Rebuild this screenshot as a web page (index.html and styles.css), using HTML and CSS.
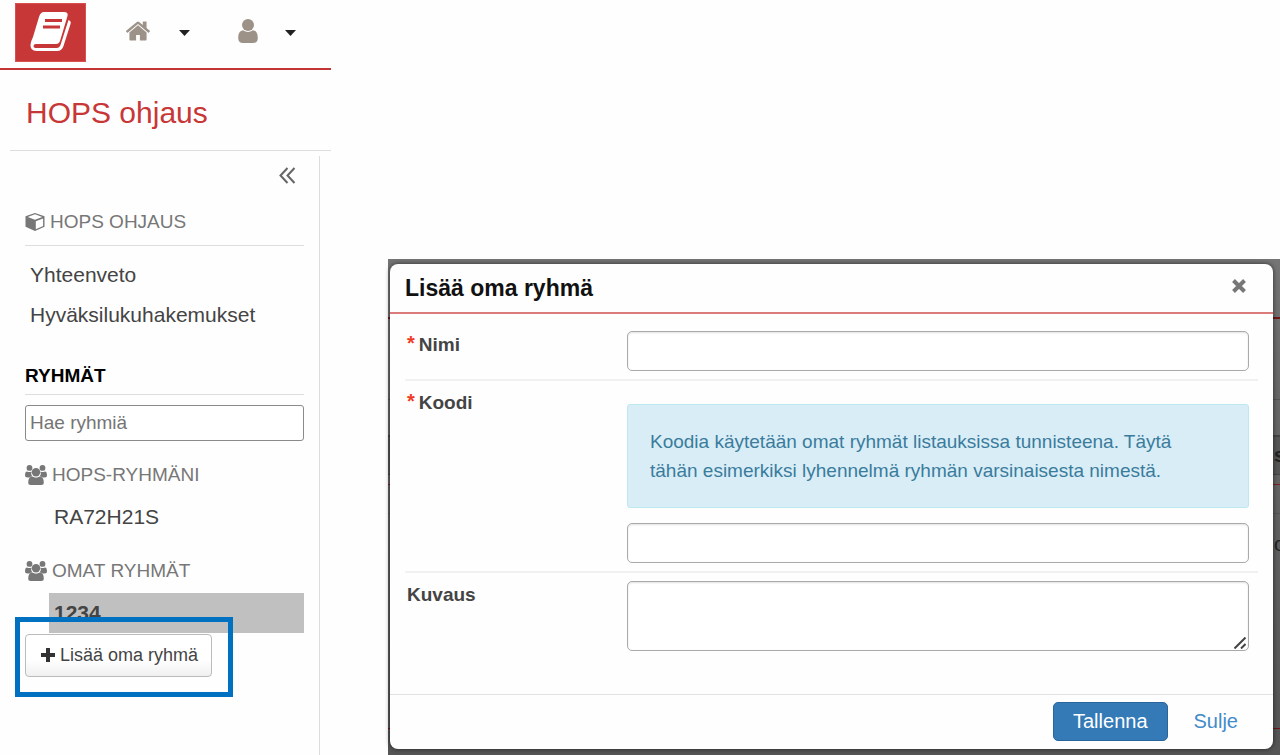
FILE: index.html
```
<!DOCTYPE html>
<html lang="fi">
<head>
<meta charset="utf-8">
<title>HOPS ohjaus</title>
<link rel="stylesheet" href="styles.css">
</head>
<body>
<svg class="defs" aria-hidden="true">
  <symbol id="group" viewBox="0 0 22 20">
    <circle cx="4.500" cy="2.900" r="2.900"/><circle cx="17.500" cy="2.900" r="2.900"/>
    <path d="M2 6.400q2.500 1 4.600 0-1.300 3 .6 5.200-1.700.2-2.600 1H2.200Q0 12.500 0 10.500 0 6.500 2 6.400zM20 6.400q-2.500 1-4.600 0 1.300 3-.6 5.200 1.700.2 2.600 1h2.400q2.200 0 2.200-2Q22 6.500 20 6.400z"/>
    <circle cx="11" cy="7.200" r="4.200"/>
    <path d="M7.200 11.500q3.800 2.300 7.600 0 4 .3 4 6 0 2.500-2.500 2.500H5.700q-2.500 0-2.500-2.500 0-5.700 4-6z"/>
  </symbol>
</svg>
<div class="layout">
  <aside class="sidebar">
    <header class="topbar">
      <a class="logo" href="#" aria-label="Etusivu">
        <svg viewBox="0 0 42 40"><path class="book-cover" d="M14 1h20q4.500 0 3.500 4L30 30q-1 3-4 3H6q-2.500 0-2.500 2t3 2h20q3 0 4-3l8-25q3 1 2 4l-7 22q-1.500 5-6.500 5H6.500Q0 40 .5 33.500 1 30 3 26L9 6q1.500-5 5-5z"/><path class="book-lines" d="M15 9.500h17M13 16h17"/></svg>
      </a>
      <button class="menu" type="button" aria-label="Koti">
        <svg class="home" viewBox="90 240 1612 1300"><path d="M1472 992v480q0 26-19 45t-45 19h-384v-384h-256v384h-384q-26 0-45-19t-19-45v-480q0-1 .5-3t.5-3l575-474 575 474q1 2 1 6zm223-69l-62 74q-8 9-21 11h-3q-13 0-21-7l-692-577-692 577q-12 8-24 7-13-2-21-11l-62-74q-8-10-7-23.500t11-21.500l719-599q32-26 76-26t76 26l244 204v-195q0-14 9-23t23-9h192q14 0 23 9t9 23v408l219 182q10 8 11 21.500t-7 23.500z"/></svg>
        <svg class="caret" viewBox="0 0 11 6"><path d="M0 0h11L5.500 6z"/></svg>
      </button>
      <button class="menu" type="button" aria-label="Käyttäjä">
        <svg class="user" viewBox="0 0 20 24"><circle cx="10" cy="6" r="6"/><path d="M5 11.300q5 3.600 10 0 4.800.4 4.800 7.700 0 5-4.800 5H5q-4.800 0-4.800-5 0-7.300 4.800-7.700z"/></svg>
        <svg class="caret" viewBox="0 0 11 6"><path d="M0 0h11L5.500 6z"/></svg>
      </button>
    </header>
    <h1 class="page-title">HOPS ohjaus</h1>
    <nav class="nav">
      <button class="collapse" type="button" aria-label="Pienennä valikko">
        <svg viewBox="0 0 17 17"><path d="M8.500 1 1.500 8.500l7 7.500M15.500 1l-7 7.500 7 7.500"/></svg>
      </button>
      <h2 class="section section-ruled">
        <svg class="cube" viewBox="0 0 19 18"><path d="M9.500 0 19 3.300v10.400L9.500 18 0 13.700V3.300z"/><path class="cube-light" d="M9.500 1.300 16.800 4 9.500 6.800 2.200 4zM10.300 8.300l7.300-2.900v7.600l-7.300 3.300z"/></svg>
        HOPS OHJAUS
      </h2>
      <ul class="links">
        <li><a href="#">Yhteenveto</a></li>
        <li><a href="#">Hyväksilukuhakemukset</a></li>
      </ul>
      <h2 class="section section-ruled section-strong"><label for="search">RYHMÄT</label></h2>
      <input class="search" id="search" type="text" placeholder="Hae ryhmiä">
      <h3 class="section"><svg class="group"><use href="#group"/></svg>HOPS-RYHMÄNI</h3>
      <a class="item" href="#">RA72H21S</a>
      <h3 class="section section-own"><svg class="group"><use href="#group"/></svg>OMAT RYHMÄT</h3>
      <a class="item item-active" href="#">1234</a>
      <div class="add-wrap">
        <button class="add" type="button"><svg viewBox="0 0 14 14"><path d="M5 0h4v5h5v4H9v5H5V9H0V5h5z"/></svg>Lisää oma ryhmä</button>
      </div>
    </nav>
  </aside>
  <main class="backdrop">
    <div class="behind" aria-hidden="true">
      <div class="behind-top"></div>
      <div class="behind-row"></div>
      <div class="behind-gap"></div>
      <div class="behind-head"><span>s</span></div>
      <div class="behind-line"></div>
      <div class="behind-space"></div>
      <div class="behind-cell"><span>o</span></div>
      <div class="behind-end"></div>
    </div>
    <form class="dialog" role="dialog" aria-labelledby="dialog-title">
      <header class="dialog-head">
        <h2 id="dialog-title">Lisää oma ryhmä</h2>
        <button class="close" type="button" aria-label="Sulje ikkuna"><svg viewBox="0 0 14 14"><path d="M1.500 1.500l11 11M12.500 1.500l-11 11"/></svg></button>
      </header>
      <div class="fields">
        <div class="field">
          <label for="name"><span class="required">*</span>Nimi</label>
          <input class="control" id="name" type="text">
        </div>
        <div class="field">
          <label for="code"><span class="required">*</span>Koodi</label>
          <div class="stack">
            <p class="info">Koodia käytetään omat ryhmät listauksissa tunnisteena. Täytä tähän esimerkiksi lyhennelmä ryhmän varsinaisesta nimestä.</p>
            <input class="control" id="code" type="text">
          </div>
        </div>
        <div class="field">
          <label for="desc">Kuvaus</label>
          <div class="area">
            <textarea class="control" id="desc"></textarea>
            <svg class="grip" viewBox="0 0 12 12" aria-hidden="true"><path d="M0.500 11.500l11-11M7 11.500l4.500-4.500"/></svg>
          </div>
        </div>
      </div>
      <footer class="dialog-foot">
        <button class="save" type="submit">Tallenna</button>
        <a class="cancel" href="#">Sulje</a>
      </footer>
    </form>
  </main>
</div>
</body>
</html>
```
FILE: styles.css
```
* { box-sizing: border-box; }
body {
  margin: 0;
  background: #fefefe;
  color: #444;
  font-family: "Liberation Sans", Arial, sans-serif;
  font-size: 20px;
}
h1, h2, h3, p, ul { margin: 0; padding: 0; font-weight: normal; }
ul { list-style: none; }
a { color: inherit; text-decoration: none; }
button, input, textarea { font: inherit; color: inherit; margin: 0; }
button { cursor: pointer; border: 0; background: none; padding: 0; }
svg { display: block; flex: none; }
.defs { position: absolute; width: 0; height: 0; }

.layout { display: flex; gap: 57px; min-height: 100vh; }

.sidebar { flex: 0 0 331px; display: flex; flex-direction: column; }
.topbar {
  display: flex;
  align-items: flex-start;
  padding: 3px 0 6px 15px;
  border-bottom: 2px solid #c23435;
}
.logo {
  display: grid;
  place-items: center;
  width: 71px;
  height: 59px;
  margin-right: 40px;
  padding-bottom: 4px;
  border: 1px solid #d65150;
  background: #c83737;
}
.logo svg { width: 42px; height: 40px; }
.book-cover { fill: #fff; }
.book-lines { fill: none; stroke: #c83737; stroke-width: 3; }
.menu { display: flex; align-items: center; gap: 29px; height: 56px; margin-right: 48px; }
.home, .user { fill: #9d9287; }
.home { width: 24px; height: 20px; }
.menu + .menu { gap: 27px; margin-right: 0; }
.user { width: 20px; height: 24px; }
.caret { width: 11px; height: 6px; margin-top: 4px; fill: #222; }

.page-title {
  margin-left: 10px;
  padding: 26px 16px 20px;
  border-bottom: 1px solid #ddd;
  color: #c83737;
  font-size: 30px;
  line-height: 34px;
}
.nav {
  flex: 1;
  margin: 5px 11px 0 0;
  padding: 11px 15px 0 25px;
  border-right: 1px solid #ddd;
}
.collapse { display: block; margin: 0 8px 26px auto; }
.collapse svg { width: 17px; height: 17px; fill: none; stroke: #666; stroke-width: 2; }
.section {
  display: flex;
  align-items: center;
  gap: 5px;
  height: 24px;
  color: #777;
  font-size: 19px;
}
.section-ruled { height: 36px; padding-bottom: 12px; border-bottom: 1px solid #ddd; }
.section-strong { height: 32px; padding-bottom: 6px; color: #000; font-weight: bold; }
.section svg { fill: #777; }
.cube { width: 20px; height: 18px; }
.section .cube-light { fill: #fff; }
.group { width: 22px; height: 20px; }
.links { padding: 9px 0 28px 5px; font-size: 21px; line-height: 40px; }
.links a { display: block; }
.search {
  display: block;
  width: 100%;
  height: 36px;
  margin: 10px 0 22px;
  padding: 0 4px;
  border: 1px solid #8a8a8a;
  border-radius: 3px;
  background: #fff;
  font-size: 19px;
}
.search::placeholder { color: #757575; }
.item {
  display: block;
  margin: 10px 0 0 24px;
  padding-left: 5px;
  font-size: 21px;
  line-height: 40px;
}
.section-own { margin-top: 22px; }
.item-active { background: #c0c0c0; font-weight: bold; }
.add-wrap {
  position: relative;
  width: 218px;
  margin: -16px 0 0 -10px;
  padding: 12px 5px 15px;
  border: 5px solid #0070c0;
}
.add {
  display: flex;
  align-items: center;
  gap: 5px;
  height: 43px;
  padding: 0 13px 0 15px;
  border: 1px solid #bbb;
  border-radius: 4px;
  background: linear-gradient(#fff 60%, #f0f0f0);
  color: #444;
  font-size: 18px;
  white-space: nowrap;
}
.add svg { width: 14px; height: 14px; margin-bottom: 2px; fill: #333; }

.backdrop {
  position: relative;
  flex: 1;
  min-width: 0;
  display: flex;
  margin-top: 259px;
  padding: 5px 7px 6px 2px;
  background: #666;
}
.behind {
  position: absolute;
  inset: 0;
  overflow: hidden;
  background: linear-gradient(#757575, #666 30%, #555);
}
.behind > div { overflow: hidden; text-align: right; }
.behind span { display: inline-block; margin-right: -5px; color: #222; }
.behind-top { height: 60px; border-bottom: 2px solid #6f1618; }
.behind-row { height: 81px; border-bottom: 1px solid #555; }
.behind-gap { height: 37px; border-bottom: 2px solid #444; }
.behind-head { height: 38px; border-bottom: 1px solid #444; background: #555; font-weight: bold; line-height: 36px; }
.behind-line { height: 10px; border-bottom: 1px solid #7f2022; }
.behind-space { height: 29px; border-bottom: 1px solid #555; }
.behind-cell { height: 60px; line-height: 60px; }
.behind-end { height: 155px; border-bottom: 1px solid #6f1618; }

.dialog {
  position: relative;
  flex: 1;
  display: flex;
  flex-direction: column;
  border-radius: 8px;
  background: #fefefe;
  box-shadow: 0 0 5px rgba(0, 0, 0, 0.6);
}
.dialog-head {
  display: flex;
  align-items: center;
  justify-content: space-between;
  height: 50px;
  padding: 0 27px 0 15px;
  border-bottom: 2px solid #dc7c7a;
}
.dialog-head h2 { color: #111; font-size: 23px; font-weight: bold; }
.close svg { width: 14px; height: 14px; margin-bottom: 4px; fill: none; stroke: #777; stroke-width: 4; }
.fields { flex: 1; padding: 9px 15px 0; }
.field {
  display: grid;
  grid-template-columns: 222px minmax(0, 1fr);
  align-items: start;
  padding: 8px 9px 8px 0;
  border-bottom: 2px solid #f1f1f1;
}
.field:last-child { border-bottom: 0; }
.field label {
  display: flex;
  gap: 4px;
  padding-left: 2px;
  color: #444;
  font-size: 19px;
  font-weight: bold;
  line-height: 28px;
}
.required { color: #f23a24; font-size: 20px; line-height: 24px; }
.control {
  display: block;
  width: 100%;
  height: 40px;
  padding: 4px 8px;
  border: 1px solid #aaa;
  border-radius: 5px;
  background: #fff;
  box-shadow: inset 0 1px 2px rgba(0, 0, 0, 0.12);
}
.stack { display: grid; gap: 15px; padding-top: 15px; }
.info {
  padding: 22px 56px 22px 22px;
  border: 1px solid #bce8f1;
  border-radius: 3px;
  background: #d9edf7;
  color: #3a7c9c;
  font-size: 19px;
  line-height: 29px;
}
.area { position: relative; }
textarea.control { height: 70px; resize: none; }
.grip { position: absolute; right: 3px; bottom: 2px; width: 12px; height: 12px; fill: none; stroke: #444; stroke-width: 2; }
.dialog-foot {
  display: flex;
  justify-content: flex-end;
  align-items: center;
  gap: 26px;
  height: 55px;
  padding: 0 35px 2px 0;
  border-top: 1px solid #e2e2e2;
}
.save {
  height: 39px;
  padding: 0 19px;
  border: 1px solid #2a659c;
  border-radius: 5px;
  background: #337ab7;
  color: #fff;
}
.cancel { color: #428bca; }
```
